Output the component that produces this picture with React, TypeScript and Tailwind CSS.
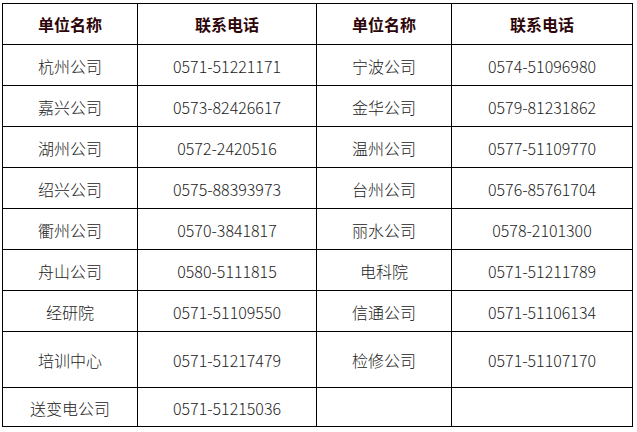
import React from "react";

const rows: [string, string, string, string][] = [
  ["杭州公司", "0571-51221171", "宁波公司", "0574-51096980"],
  ["嘉兴公司", "0573-82426617", "金华公司", "0579-81231862"],
  ["湖州公司", "0572-2420516", "温州公司", "0577-51109770"],
  ["绍兴公司", "0575-88393973", "台州公司", "0576-85761704"],
  ["衢州公司", "0570-3841817", "丽水公司", "0578-2101300"],
  ["舟山公司", "0580-5111815", "电科院", "0571-51211789"],
  ["经研院", "0571-51109550", "信通公司", "0571-51106134"],
  ["培训中心", "0571-51217479", "检修公司", "0571-51107170"],
  ["送变电公司", "0571-51215036", "", ""],
];

export default function App() {
  const headers = ["单位名称", "联系电话", "单位名称", "联系电话"];
  return (
    <div
      className="w-[637px] h-[432px] bg-white pl-[2px] pt-[3px]"
      style={{ fontFamily: '"Noto Sans CJK SC", "Noto Sans", sans-serif' }}
    >
      <div className="inline-grid bg-black p-px gap-px grid-cols-[134px_178px_134px_180px] grid-rows-[40px_40px_40px_40px_40px_40px_40px_40px_55px_38px]">
        {headers.map((h, i) => (
          <div
            key={"h" + i}
            className="bg-white flex items-center justify-center text-[16px] font-bold text-[#2e0508] leading-none"
          >
            {h}
          </div>
        ))}
        {rows.map((r, ri) =>
          r.map((c, ci) => (
            <div
              key={ri + "-" + ci}
              className="bg-white flex items-center justify-center text-[16px] font-light text-[#222222] leading-none pt-px"
            >
              {c}
            </div>
          ))
        )}
      </div>
    </div>
  );
}
